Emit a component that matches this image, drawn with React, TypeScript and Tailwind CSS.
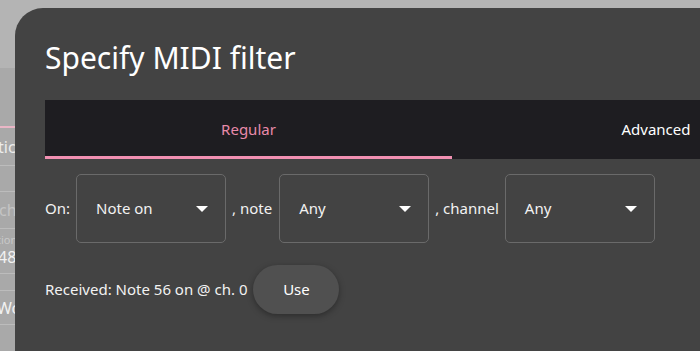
import React from "react";

function Caret() {
  return (
    <svg width="12" height="6" viewBox="0 0 12 6" className="shrink-0">
      <path d="M0 0h12L6 6z" fill="#ffffff" />
    </svg>
  );
}

function Select({ value }: { value: string }) {
  return (
    <div className="flex h-[69px] w-[150px] shrink-0 items-center justify-between rounded-[5px] border border-[#6a6a6a] pl-[19px] pr-[17px]">
      <span className="text-[15px] text-[#f2f2f2]">{value}</span>
      <Caret />
    </div>
  );
}

export default function App() {
  return (
    <div
      className="flex h-[351px] w-[700px] overflow-hidden bg-[#b4b4b4]"
      style={{ fontFamily: '"Noto Sans", "Open Sans", sans-serif' }}
    >
      {/* page behind the dialog */}
      <div className="flex w-[15px] shrink-0 flex-col overflow-hidden">
        <div className="h-[68px] shrink-0 bg-[#b4b4b4]" />
        <div className="flex flex-1 flex-col bg-[#a9a9a9]">
          <div className="h-[58px] shrink-0" />
          <div className="h-[2px] shrink-0 bg-[#eab6c6]" />
          <div className="flex h-[38px] shrink-0 items-center border-b border-[#bcbcbc]">
            <span className="-ml-[2px] whitespace-nowrap text-[16px] text-[#ececec]">tick</span>
          </div>
          <div className="h-[26px] shrink-0 border-b border-[#bcbcbc]" />
          <div className="flex h-[37px] shrink-0 items-center border-b border-[#bcbcbc]">
            <span className="-ml-[1px] whitespace-nowrap text-[16px] text-[#c4c4c4]">ch</span>
          </div>
          <div className="flex h-[45px] shrink-0 flex-col justify-center border-b border-[#bcbcbc]">
            <span className="-ml-[3px] whitespace-nowrap text-[11px] leading-[12px] text-[#c8c8c8]">tion</span>
            <span className="-ml-[2px] whitespace-nowrap text-[16px] leading-[22px] text-[#f2f2f2]">48</span>
          </div>
          <div className="h-[17px] shrink-0 border-b border-[#bcbcbc]" />
          <div className="flex h-[34px] shrink-0 items-center border-b border-[#bcbcbc]">
            <span className="-ml-[3px] whitespace-nowrap text-[16px] text-[#f2f2f2]">Wo</span>
          </div>
        </div>
      </div>

      {/* dialog */}
      <div className="mt-[8px] flex flex-1 flex-col rounded-tl-[28px] bg-[#434343] pl-[30px] pt-[35px]">
        <h1 className="text-[30px] leading-[30px] text-white">Specify MIDI filter</h1>

        <div className="mt-[27px] flex h-[59px] w-[815px] shrink-0 bg-[#1e1d21]">
          <div className="flex w-[407px] items-center justify-center border-b-[3px] border-[#f190b2] pt-[3px] text-[15px] text-[#e88aaa]">
            Regular
          </div>
          <div className="flex w-[408px] items-center justify-center text-[15px] text-white">
            Advanced
          </div>
        </div>

        <div className="mt-[15px] flex items-center gap-[6px] text-[15px] text-[#f2f2f2]">
          <span>On:</span>
          <Select value="Note on" />
          <span className="mr-[1px]">, note</span>
          <Select value="Any" />
          <span>, channel</span>
          <Select value="Any" />
        </div>

        <div className="mt-[22px] flex items-center gap-[6px] text-[15px] text-[#f2f2f2]">
          <span>Received: Note 56 on @ ch. 0</span>
          <button className="h-[49px] w-[86px] rounded-full bg-[#505050] text-[15px] text-white shadow-[0_2px_6px_rgba(0,0,0,0.35)]">
            Use
          </button>
        </div>
      </div>
    </div>
  );
}
